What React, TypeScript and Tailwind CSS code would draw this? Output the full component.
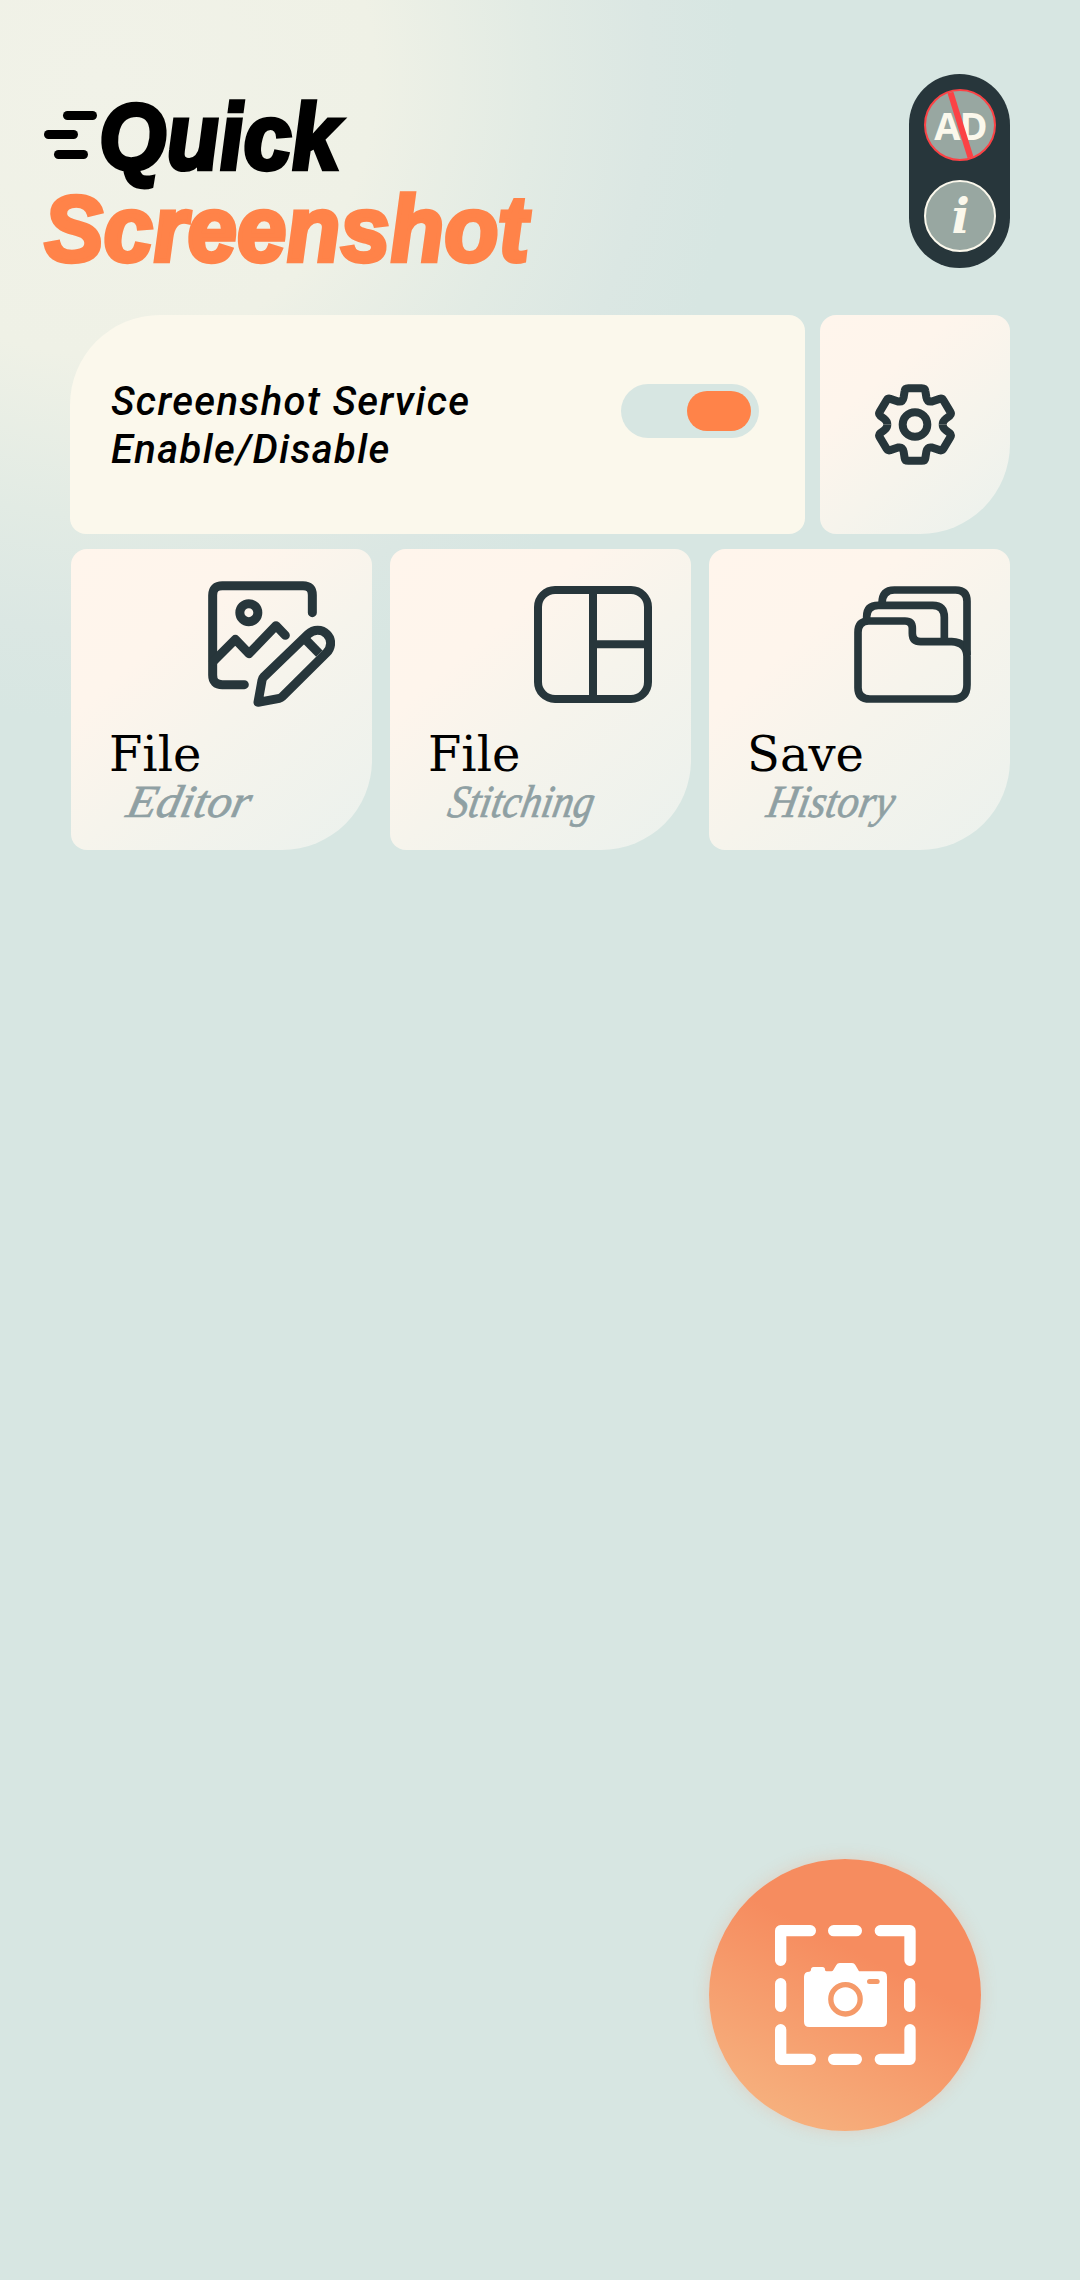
import type { ReactNode } from "react";

const INK = "#27363b";

function SpeedLines() {
  return (
    <svg className="h-[49px] w-[54px] shrink-0" viewBox="0 0 54 49" fill="#000">
      <rect x="19" y="0" width="34" height="9" rx="4.5" />
      <rect x="0" y="19" width="34" height="9" rx="4.5" />
      <rect x="10" y="39" width="34" height="9" rx="4.5" />
    </svg>
  );
}

function GearIcon() {
  const quarter =
    "M0 -109 H20 Q30 -109 31 -101 L34 -82 Q37 -67 50 -69 L74 -77 Q81 -79 85 -73 L106 -38 Q110 -31 104 -26 L92 -17 Q83 -10 83 0";
  return (
    <svg className="h-[81px] w-[80px]" viewBox="-120 -121.5 240 243" fill="none" stroke={INK} strokeWidth="24">
      <path d={quarter} />
      <path d={quarter} transform="scale(-1 1)" />
      <path d={quarter} transform="scale(1 -1)" />
      <path d={quarter} transform="scale(-1 -1)" />
      <circle r="37" />
    </svg>
  );
}

function EditIcon() {
  return (
    <svg
      className="h-[126px] w-[127px]"
      viewBox="444 123 381 378"
      fill="none"
      stroke={INK}
      strokeWidth="27"
      strokeLinecap="round"
      strokeLinejoin="round"
    >
      <path d="M757 218 V165 Q757 137 729 137 H487 Q458 137 458 166 V405 Q458 434 487 434 H553" />
      <circle cx="566.5" cy="218" r="27" />
      <path d="M460 364 L526 298 L567 341 L648 257 L676 286" />
      <path d="M594 487 L606 421 Q607 415 611 411 L744 283 Q757 271 773 271 A39 39 0 0 1 812 310 Q811 327 800 338 L667 470 Q663 474 658 475 Z" />
      <path d="M738 300 L778 341" strokeLinecap="butt" />
    </svg>
  );
}

function StitchIcon() {
  return (
    <svg className="h-[117px] w-[118px]" viewBox="462 138 354 351" fill="none" stroke={INK} strokeWidth="24">
      <rect x="474" y="150" width="330" height="327" rx="51" />
      <path d="M639 150 V477 M639 313 H804" />
    </svg>
  );
}

function FolderIcon() {
  return (
    <svg className="h-[117px] w-[117px]" viewBox="477 138 351 351" fill="none" stroke={INK} strokeWidth="23">
      <path d="M489 277 Q489 243 521 243 H630 Q652 243 652 265 V280 Q652 305 677 305 H770 Q816 307 816 350 V434 Q816 477 773 477 H525 Q489 477 489 443 Z" />
      <path d="M515 243 V230 Q515 196 550 196 H713 Q748 196 748 232 V300" />
      <path d="M561 190 Q561 150 598 150 H782 Q816 150 816 184 V345" />
    </svg>
  );
}

function CaptureIcon() {
  return (
    <svg className="h-[140px] w-[141px]" viewBox="255 255 423 420">
      <g fill="none" stroke="#fff" strokeWidth="34" strokeLinecap="round" strokeLinejoin="round">
        <path d="M361 272 H272 V361" />
        <path d="M571 272 H660 V361" />
        <path d="M272 569 V658 H361" />
        <path d="M660 569 V658 H571" />
        <path d="M431 272 H499 M431 658 H499 M272 431 V499 M659 431 V499" />
      </g>
      <path
        fill="#fff"
        d="M358 395 Q363 394 363 389 Q363 381 371 381 H397 Q405 381 405 389 Q405 394 410 394 H424 Q428 394 430 390 L439 375 Q442 369 449 369 H486 Q493 369 496 375 L507 394 H575 Q591 395 591 411 V545 Q591 561 575 561 H358 Q342 561 342 545 V411 Q342 395 358 395 Z"
      />
      <circle cx="466.500" cy="478" r="44" fill="none" stroke="#f59a69" strokeWidth="16" />
      <rect x="531" y="417" width="38" height="15" rx="7.500" fill="#f59a69" />
    </svg>
  );
}

type TileProps = { title: string; subtitle: string; subtitleClass: string; iconClass: string; children: ReactNode };

function Tile({ title, subtitle, subtitleClass, iconClass, children }: TileProps) {
  return (
    <button className="flex h-[301px] w-[301px] flex-col rounded-2xl rounded-br-[90px] bg-[linear-gradient(140deg,#fff5ec_0%,#fef5ec_30%,#f6f4ec_55%,#ebf1ed_100%)] text-left">
      <div className={"flex h-[175px] w-full justify-end " + iconClass}>{children}</div>
      <div className="h-[54px] pl-[38px]">
        <span className="font-['DejaVu_Serif'] text-[48px] leading-[60px] text-black">{title}</span>
      </div>
      <div className="h-12 pl-[57px]">
        <span
          className={
            "inline-block origin-left font-['Liberation_Serif'] text-[46px] leading-[48px] italic text-[#8fa0a3] -skew-x-12 [-webkit-text-stroke:0.7px_#8fa0a3] " +
            subtitleClass
          }
        >
          {subtitle}
        </span>
      </div>
    </button>
  );
}

export default function App() {
  return (
    <div className="flex h-[2280px] w-[1080px] flex-col bg-[#d7e6e2] bg-[radial-gradient(circle_640px_at_100px_80px,#f1f2e8_0%,#eff1e6_43%,#e2ebe4_68%,#dbe7e3_86%,#d7e6e2_100%)]">
      <header className="flex h-[268px] justify-between pt-[74px] pr-[70px] pl-[44px]">
        <div className="pt-[15px] font-['Liberation_Sans'] text-[93px] leading-[92px] font-bold italic">
          <div className="flex h-[92px] items-center">
            <SpeedLines />
            <span className="inline-block origin-left translate-x-px translate-y-[2px] skew-x-3 scale-x-[0.93] text-black [-webkit-text-stroke:4.5px_#000]">
              Quick
            </span>
          </div>
          <div className="h-[92px]">
            <span className="inline-block origin-left translate-y-[2px] skew-x-3 scale-x-[0.955] text-[#ff8349] [-webkit-text-stroke:4.5px_#ff8349]">
              Screenshot
            </span>
          </div>
        </div>
        <div className="flex h-[194px] w-[101px] flex-col items-center gap-[19px] rounded-full bg-[#27363b] pt-[15px]">
          <button className="relative flex size-[72px] items-center justify-center overflow-hidden rounded-full border-2 border-[#fb4245] bg-[#98a7a1] pl-[2px] font-['Open_Sans'] text-[38px] leading-none font-bold tracking-[-1px] text-[#fbf8ec]">
            AD
            <svg className="absolute inset-0 size-full" viewBox="0 0 68 68">
              <path d="M24 0 L45 68" stroke="#fb4245" strokeWidth="6" />
            </svg>
          </button>
          <button className="flex size-[72px] items-center justify-center rounded-full border-2 border-[#fbf8ec] bg-[#98a7a1] pl-[2px] font-['DejaVu_Serif'] text-[48px] leading-none font-bold italic text-[#fbf8ec]">
            i
          </button>
        </div>
      </header>

      <main className="mt-[47px] flex flex-col gap-[15px] pr-[70px] pl-[70px]">
        <section className="flex h-[219px] gap-[15px]">
          <div className="flex w-[735px] justify-between rounded-2xl rounded-tl-[90px] bg-[#fbf8ec] pt-[63px] pr-[46px] pl-[41px]">
            <p className="font-['Roboto'] text-[40px] leading-[48px] font-medium tracking-[1.35px] italic text-black">
              Screenshot Service
              <br />
              Enable/Disable
            </p>
            <button className="mt-[6px] flex h-[54px] w-[138px] items-center justify-end rounded-full bg-[#d7e6e2] pr-2">
              <span className="h-10 w-16 rounded-full bg-[#ff8349]" />
            </button>
          </div>
          <button className="flex w-[190px] items-center justify-center rounded-2xl rounded-br-[90px] bg-[linear-gradient(140deg,#fff5ec_0%,#fef5ec_30%,#f6f4ec_60%,#ebf1ed_100%)]">
            <GearIcon />
          </button>
        </section>
        <section className="flex justify-between pl-px">
          <Tile title="File" subtitle="Editor" subtitleClass="scale-x-[1.05]" iconClass="pt-8 pr-[37px]">
            <EditIcon />
          </Tile>
          <Tile title="File" subtitle="Stitching" subtitleClass="scale-x-[0.89] translate-x-[2px]" iconClass="pt-[37px] pr-[39px]">
            <StitchIcon />
          </Tile>
          <Tile title="Save" subtitle="History" subtitleClass="scale-x-[0.92] translate-x-[2px]" iconClass="pt-[37px] pr-[39px]">
            <FolderIcon />
          </Tile>
        </section>
      </main>

      <div className="mt-auto flex justify-end pr-[99px] pb-[149px]">
        <button className="flex size-[272px] items-center justify-center rounded-full bg-[linear-gradient(207deg,#f68c5f_0%,#f68c5f_38%,#f6b380_92%)] shadow-[0_0_16px_rgba(246,140,95,0.25)]">
          <CaptureIcon />
        </button>
      </div>
    </div>
  );
}
